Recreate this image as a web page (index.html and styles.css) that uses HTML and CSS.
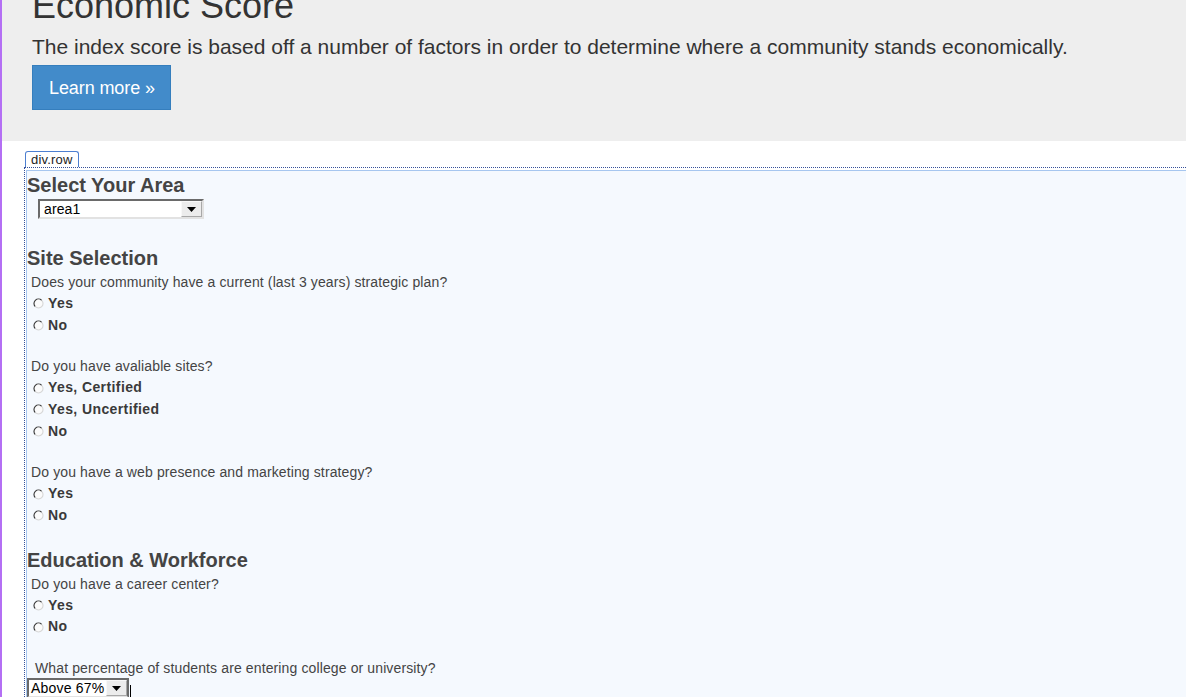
FILE: index.html
```html
<!DOCTYPE html>
<html lang="en">
<head>
<meta charset="utf-8">
<title>Economic Score</title>
<link rel="stylesheet" href="styles.css">
</head>
<body>
<div class="page">
  <div class="jumbotron">
    <h1 class="jt-title">Economic Score</h1>
    <p class="jt-lead">The index score is based off a number of factors in order to determine where a community stands economically.</p>
    <a class="btn-learn" href="#">Learn more »</a>
  </div>

  <div class="inspect">
    <div class="tag">div.row</div>
    <div class="outline">
      <div class="row">
        <h3 class="sec sec-first">Select Your Area</h3>
        <div class="select sel-area">
          <span class="sel-text">area1</span>
          <span class="sel-btn"><svg width="9" height="5" viewBox="0 0 9 5"><path d="M0 0H9L4.5 5Z" fill="#000"/></svg></span>
        </div>

        <h3 class="sec sec-site">Site Selection</h3>
        <div class="q">
          <p class="q-text">Does your community have a current (last 3 years) strategic plan?</p>
          <label class="opt"><svg class="radio" width="11" height="11" viewBox="0 0 11 11"><circle cx="5.5" cy="5.5" r="4.5" fill="#fbfbfb"/><path d="M2.3 8.7A4.5 4.5 0 0 1 8.7 2.3" fill="none" stroke="#333" stroke-width="1.1"/><path d="M8.7 2.3A4.5 4.5 0 0 1 2.3 8.7" fill="none" stroke="#d6d6d6" stroke-width="1.1"/></svg>Yes</label>
          <label class="opt"><svg class="radio" width="11" height="11" viewBox="0 0 11 11"><circle cx="5.5" cy="5.5" r="4.5" fill="#fbfbfb"/><path d="M2.3 8.7A4.5 4.5 0 0 1 8.7 2.3" fill="none" stroke="#333" stroke-width="1.1"/><path d="M8.7 2.3A4.5 4.5 0 0 1 2.3 8.7" fill="none" stroke="#d6d6d6" stroke-width="1.1"/></svg>No</label>
        </div>
        <div class="q">
          <p class="q-text">Do you have avaliable sites?</p>
          <label class="opt"><svg class="radio" width="11" height="11" viewBox="0 0 11 11"><circle cx="5.5" cy="5.5" r="4.5" fill="#fbfbfb"/><path d="M2.3 8.7A4.5 4.5 0 0 1 8.7 2.3" fill="none" stroke="#333" stroke-width="1.1"/><path d="M8.7 2.3A4.5 4.5 0 0 1 2.3 8.7" fill="none" stroke="#d6d6d6" stroke-width="1.1"/></svg>Yes, Certified</label>
          <label class="opt"><svg class="radio" width="11" height="11" viewBox="0 0 11 11"><circle cx="5.5" cy="5.5" r="4.5" fill="#fbfbfb"/><path d="M2.3 8.7A4.5 4.5 0 0 1 8.7 2.3" fill="none" stroke="#333" stroke-width="1.1"/><path d="M8.7 2.3A4.5 4.5 0 0 1 2.3 8.7" fill="none" stroke="#d6d6d6" stroke-width="1.1"/></svg>Yes, Uncertified</label>
          <label class="opt"><svg class="radio" width="11" height="11" viewBox="0 0 11 11"><circle cx="5.5" cy="5.5" r="4.5" fill="#fbfbfb"/><path d="M2.3 8.7A4.5 4.5 0 0 1 8.7 2.3" fill="none" stroke="#333" stroke-width="1.1"/><path d="M8.7 2.3A4.5 4.5 0 0 1 2.3 8.7" fill="none" stroke="#d6d6d6" stroke-width="1.1"/></svg>No</label>
        </div>
        <div class="q">
          <p class="q-text">Do you have a web presence and marketing strategy?</p>
          <label class="opt"><svg class="radio" width="11" height="11" viewBox="0 0 11 11"><circle cx="5.5" cy="5.5" r="4.5" fill="#fbfbfb"/><path d="M2.3 8.7A4.5 4.5 0 0 1 8.7 2.3" fill="none" stroke="#333" stroke-width="1.1"/><path d="M8.7 2.3A4.5 4.5 0 0 1 2.3 8.7" fill="none" stroke="#d6d6d6" stroke-width="1.1"/></svg>Yes</label>
          <label class="opt"><svg class="radio" width="11" height="11" viewBox="0 0 11 11"><circle cx="5.5" cy="5.5" r="4.5" fill="#fbfbfb"/><path d="M2.3 8.7A4.5 4.5 0 0 1 8.7 2.3" fill="none" stroke="#333" stroke-width="1.1"/><path d="M8.7 2.3A4.5 4.5 0 0 1 2.3 8.7" fill="none" stroke="#d6d6d6" stroke-width="1.1"/></svg>No</label>
        </div>

        <h3 class="sec sec-edu">Education &amp; Workforce</h3>
        <div class="q">
          <p class="q-text">Do you have a career center?</p>
          <label class="opt"><svg class="radio" width="11" height="11" viewBox="0 0 11 11"><circle cx="5.5" cy="5.5" r="4.5" fill="#fbfbfb"/><path d="M2.3 8.7A4.5 4.5 0 0 1 8.7 2.3" fill="none" stroke="#333" stroke-width="1.1"/><path d="M8.7 2.3A4.5 4.5 0 0 1 2.3 8.7" fill="none" stroke="#d6d6d6" stroke-width="1.1"/></svg>Yes</label>
          <label class="opt"><svg class="radio" width="11" height="11" viewBox="0 0 11 11"><circle cx="5.5" cy="5.5" r="4.5" fill="#fbfbfb"/><path d="M2.3 8.7A4.5 4.5 0 0 1 8.7 2.3" fill="none" stroke="#333" stroke-width="1.1"/><path d="M8.7 2.3A4.5 4.5 0 0 1 2.3 8.7" fill="none" stroke="#d6d6d6" stroke-width="1.1"/></svg>No</label>
        </div>
        <div class="q">
          <p class="q-text q-indent">What percentage of students are entering college or university?</p>
          <div class="sel-line">
            <div class="select sel-pct">
              <span class="sel-text">Above 67%</span>
              <span class="sel-btn"><svg width="9" height="5" viewBox="0 0 9 5"><path d="M0 0H9L4.5 5Z" fill="#000"/></svg></span>
            </div>
            <span class="caret"></span>
          </div>
        </div>
      </div>
    </div>
  </div>
</div>
</body>
</html>
```

FILE: styles.css
```css
html, body {
  margin: 0;
  padding: 0;
  background: #fff;
}

body {
  font-family: "Liberation Sans", Arial, sans-serif;
  overflow: hidden;
}

.page {
  border-left: 2px solid #b46ff4;
  min-height: 100vh;
}

/* ---------- jumbotron ---------- */
.jumbotron {
  display: flow-root;
  background: #eeeeee;
  color: #333;
  padding: 0 0 31px 30px;
}

.jt-title {
  margin: -14px 0 0;
  font-size: 36px;
  line-height: 40px;
  font-weight: normal;
}

.jt-lead {
  margin: 6px 0 3px;
  font-size: 21px;
  line-height: 30px;
}

.btn-learn {
  display: block;
  width: fit-content;
  background: #428bca;
  border: 1px solid #357ebd;
  color: #fff;
  text-decoration: none;
  font-size: 18px;
  line-height: 23px;
  padding: 11px 15px 9px 16px;
  letter-spacing: -0.1px;
}

/* ---------- inspector overlay ---------- */
.inspect {
  margin: 10px 0 0 22px;
}

.tag {
  width: fit-content;
  margin-left: 1px;
  height: 15px;
  padding: 0 5px;
  border: 1px solid #4d7fd0;
  border-bottom: none;
  border-radius: 3px 3px 0 0;
  background: #fff;
  color: #222;
  font-size: 13px;
  line-height: 15px;
  letter-spacing: 0.2px;
}

.outline {
  border-top: 1px dotted #35509a;
  border-left: 1px dotted #35509a;
  padding: 2px 0 0 1px;
}

.row {
  border-top: 1px solid #a6c6ef;
  border-left: 1px solid #a6c6ef;
  background: #f5f9fe;
  padding-bottom: 40px;
  color: #444;
}

/* ---------- form ---------- */
.sec {
  margin: 0;
  font-size: 20px;
  line-height: 24px;
  font-weight: bold;
  color: #444;
}

.sec-first { margin-top: 2px; }
.sec-site { margin-top: 27px; }
.sec-edu { margin-top: 21px; }

.q { margin-top: 20px; }
.sec + .q { margin-top: 2px; }

.q-text {
  margin: 0;
  padding-left: 4px;
  font-size: 14px;
  line-height: 21px;
  letter-spacing: 0.12px;
  color: #444;
}

.q-indent { padding-left: 8px; }

.opt {
  display: flex;
  align-items: center;
  gap: 4px;
  box-sizing: border-box;
  height: 21.7px;
  padding: 0 0 2px 6px;
  font-size: 14px;
  font-weight: bold;
  letter-spacing: 0.4px;
  color: #3a3a3a;
}

.radio {
  flex: none;
  margin-top: 2px;
}

/* ---------- selects ---------- */
.select {
  display: flex;
  box-sizing: border-box;
  height: 20px;
  border: 2px solid;
  border-color: #6a6a6a #e2e2e2 #e2e2e2 #6a6a6a;
  background: #fff;
  color: #000;
}

.sel-text {
  font-size: 14px;
  line-height: 16px;
  padding-left: 4px;
  letter-spacing: 0.1px;
}

.sel-btn {
  margin-left: auto;
  box-sizing: border-box;
  width: 21px;
  height: 16px;
  display: flex;
  align-items: center;
  justify-content: center;
  background: #ececec;
  border: 1px solid;
  border-color: #f8f8f8 #a8a8a8 #a8a8a8 #f8f8f8;
}

.sel-area {
  width: 166px;
  margin: 2px 0 0 11px;
}

.sel-line {
  display: flex;
  align-items: flex-start;
  margin-top: -1px;
}

.sel-pct {
  width: 102px;
  border-right-color: #6a6a6a;
}

.sel-pct .sel-text {
  padding-left: 2px;
  letter-spacing: 0.2px;
}

.caret {
  width: 1px;
  height: 16px;
  margin: 7px 0 0 1px;
  background: #000;
}
```
